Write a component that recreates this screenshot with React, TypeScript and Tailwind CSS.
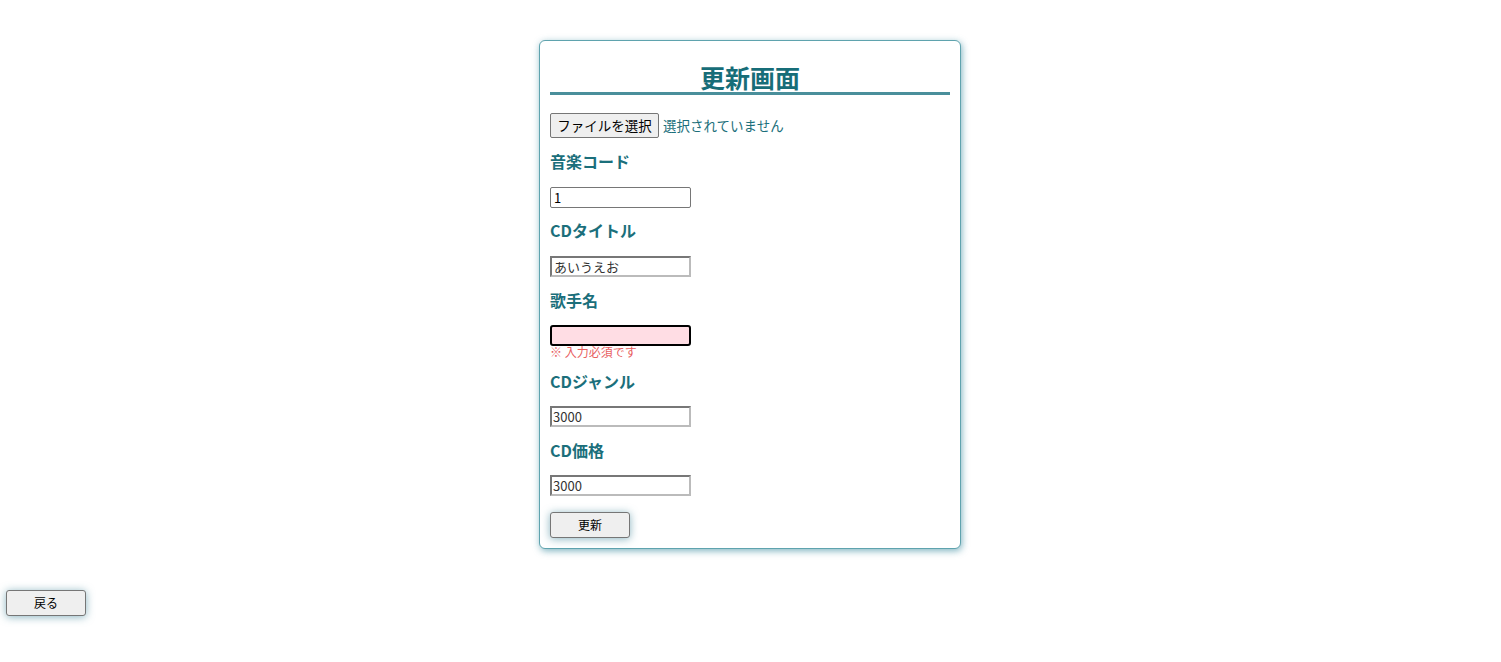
import React from 'react';

const jp = { fontFamily: '"Noto Sans CJK JP", "Noto Sans", sans-serif' };

function Label({ children }: { children: React.ReactNode }) {
  return (
    <div className="h-[20px] text-[16px] leading-[20px] font-bold text-[#1b6f7b]">{children}</div>
  );
}

export default function App() {
  return (
    <div className="min-h-screen bg-white pt-[40px]" style={jp}>
      {/* update card */}
      <div className="ml-[539px] w-[422px] rounded-[6px] border border-[#5fa3ae] bg-white px-[10px] pb-[10px] pt-[10px] shadow-[1px_2px_7px_rgba(60,140,160,0.65)]">
        <h2 className="mt-[11px] h-[33px] border-b-[3px] border-[#4a8f9b] text-center text-[25px] font-bold leading-[30px] text-[#176d78]">
          更新画面
        </h2>

        {/* file picker */}
        <div className="mt-[18px] flex h-[25px] items-center gap-[4px]">
          <button className="h-[25px] w-[109px] rounded-[2px] border border-[#767676] bg-[#efefef] text-[13.5px] text-black">
            ファイルを選択
          </button>
          <span className="text-[13.5px] text-[#1b6f7b]">選択されていません</span>
        </div>

        <div className="mt-[13px]">
          <Label>音楽コード</Label>
          <input
            defaultValue="1"
            className="mt-[16px] block h-[21px] w-[141px] rounded-[2px] border border-[#767676] px-[3px] text-[13px] text-black outline-none"
          />
        </div>

        <div className="mt-[12px]">
          <Label>CDタイトル</Label>
          <input
            defaultValue="あいうえお"
            className="mt-[16px] block h-[21px] w-[141px] border-2 border-[#bbb] border-t-[#777] border-l-[#777] px-[2px] text-[13px] text-[#333] outline-none"
          />
        </div>

        <div className="mt-[13px]">
          <Label>歌手名</Label>
          <input className="mt-[15px] block h-[21px] w-[141px] rounded-[3px] border-2 border-black bg-[#ffdde4] outline-none" />
          <div className="h-[12px] text-[12px] leading-[11px] text-[#e8605f]">※ 入力必須です</div>
        </div>

        <div className="mt-[13px]">
          <Label>CDジャンル</Label>
          <input
            defaultValue="3000"
            className="mt-[15px] block h-[21px] w-[141px] border-2 border-[#bbb] border-t-[#777] border-l-[#777] px-[1px] text-[13px] text-[#333] outline-none"
          />
        </div>

        <div className="mt-[13px]">
          <Label>CD価格</Label>
          <input
            defaultValue="3000"
            className="mt-[15px] block h-[21px] w-[141px] border-2 border-[#bbb] border-t-[#777] border-l-[#777] px-[1px] text-[13px] text-[#333] outline-none"
          />
        </div>

        <button className="mt-[16px] block h-[26px] w-[80px] rounded-[3px] border border-[#767676] bg-[#efefef] text-[12px] text-black shadow-[0_1px_9px_rgba(60,130,150,0.6)]">
          更新
        </button>
      </div>

      <div className="mt-[40px] pl-[6px]">
        <button className="h-[26px] w-[80px] rounded-[3px] border border-[#767676] bg-[#efefef] text-[12px] text-black shadow-[0_1px_9px_rgba(60,130,150,0.6)]">
          戻る
        </button>
      </div>
    </div>
  );
}
